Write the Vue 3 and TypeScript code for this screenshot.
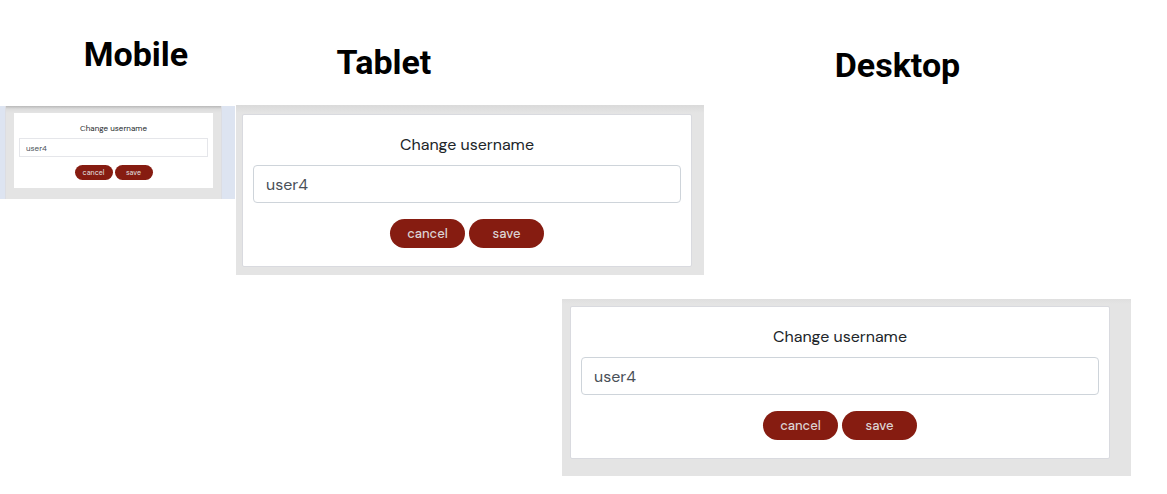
<script setup lang="ts">
import { reactive } from 'vue'

interface Preview {
  id: string
  title: string
  username: string
}

const previews = reactive<Preview[]>([
  { id: 'mobile', title: 'Mobile', username: 'user4' },
  { id: 'tablet', title: 'Tablet', username: 'user4' },
  { id: 'desktop', title: 'Desktop', username: 'user4' },
])
</script>

<template>
  <main class="board">
    <template v-for="p in previews" :key="p.id">
      <h2 class="title" :class="p.id">{{ p.title }}</h2>
      <section class="preview" :class="p.id">
        <div class="backdrop">
          <form class="card" @submit.prevent>
            <label class="label" :for="`username-${p.id}`">Change username</label>
            <input :id="`username-${p.id}`" v-model="p.username" class="field" type="text" />
            <div class="actions">
              <button class="btn" type="button">cancel</button>
              <button class="btn" type="submit">save</button>
            </div>
          </form>
        </div>
      </section>
    </template>
  </main>
</template>

<style>
body {
  margin: 0;
  background: #fff;
}
</style>

<style scoped>
.board {
  display: grid;
  grid-template-columns: 236fr 326fr 142fr 427fr 36fr;
  grid-template-rows: 105px auto auto;
  row-gap: 0;
  align-items: start;
  font-family: "DM Sans", Inter, "Open Sans", sans-serif;
  color: #212529;
}

.board * {
  box-sizing: border-box;
}

.title {
  grid-row: 1;
  margin: 0;
  font-family: Bahnschrift, Roboto, sans-serif;
  font-size: 34px;
  font-weight: 700;
  line-height: 40px;
  text-align: center;
  color: #000;
}

.title.mobile {
  grid-column: 1;
  padding: 34px 0 0 36px;
}

.title.tablet {
  grid-column: 2;
  padding: 42px 30px 0 0;
}

.title.desktop {
  grid-column: 4;
  padding: 45px 40px 0 0;
}

.backdrop {
  background: linear-gradient(#dadada, #e4e4e4 8px);
}

.preview.mobile {
  grid-row: 2;
  grid-column: 1;
  margin: 1px 1px 0 0;
  padding: 0 13px 0 5px;
  background: #dde4f1;
}

.preview.tablet {
  grid-row: 2;
  grid-column: 2 / 4;
}

.preview.desktop {
  grid-row: 3;
  grid-column: 3 / 5;
  margin-top: 24px;
}

.tablet .backdrop {
  padding: 9px 12px 8px 6px;
}

.desktop .backdrop {
  padding: 7px 21px 17px 8px;
  background: linear-gradient(#dfdfdf, #e4e4e4 5px);
}

.mobile .backdrop {
  padding: 7px 8px 11px;
  border: solid #dcdde2;
  border-width: 0 1px;
  background: linear-gradient(#b9b9b9, #dcdcdc 3px, #e4e4e4 7px);
}

.card {
  display: flex;
  flex-direction: column;
  padding: 18px 10px;
  border: 1px solid #d9dadf;
  border-radius: 2px;
  background: #fff;
}

.label {
  margin-bottom: 8px;
  font-size: 16px;
  line-height: 24px;
  text-align: center;
}

.field {
  width: 100%;
  height: 38px;
  margin: 0;
  padding: 0 12px;
  border: 1px solid #ced4da;
  border-radius: 4px;
  outline: 0;
  background: #fff;
  font: inherit;
  font-size: 16px;
  color: #495057;
}

.actions {
  display: flex;
  justify-content: center;
  gap: 4px;
  margin-top: 16px;
}

.btn {
  width: 75px;
  height: 29px;
  padding: 0;
  border: 0;
  border-radius: 15px;
  background: #861c11;
  font: inherit;
  font-size: 13px;
  font-weight: 500;
  color: #dcd3d3;
  cursor: pointer;
}

.mobile .card {
  padding: 9px 5px 8px;
  border: 0;
  border-radius: 0;
}

.mobile .label {
  margin-bottom: 4px;
  font-size: 8px;
  line-height: 12px;
}

.mobile .field {
  height: 19px;
  padding: 0 6px;
  border-color: #e5e6ea;
  border-radius: 0;
  font-size: 8px;
}

.mobile .actions {
  gap: 2px;
  margin-top: 8px;
}

.mobile .btn {
  width: 38px;
  height: 15px;
  border-radius: 8px;
  font-size: 7px;
}
</style>
